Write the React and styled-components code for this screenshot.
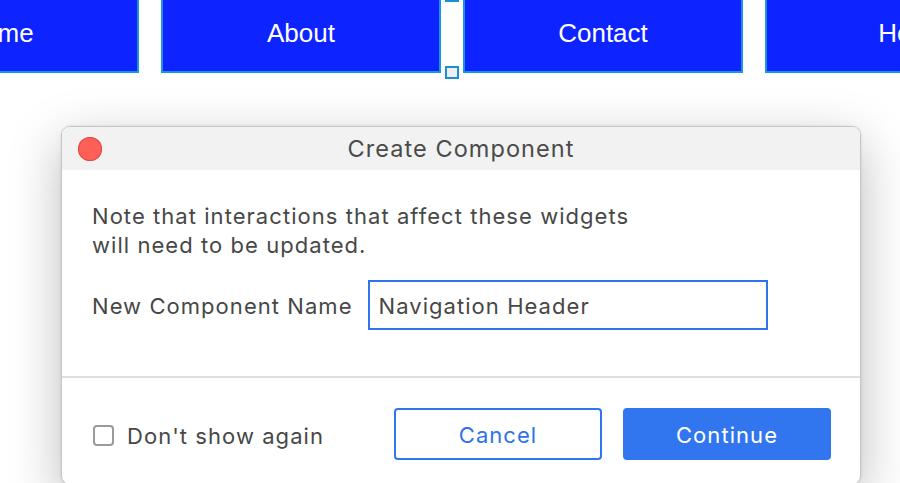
import React from "react";
import styled, { createGlobalStyle } from "styled-components";

const Global = createGlobalStyle`
  html, body { margin: 0; padding: 0; background: #ffffff; }
  body { width: 900px; height: 483px; overflow: hidden; }
`;

const Page = styled.div`
  width: 900px;
  height: 483px;
  overflow: hidden;
  display: flex;
  flex-direction: column;
  align-items: flex-start;
`;

const NavWrap = styled.div`
  position: relative;
  margin-left: -141px;
`;

const NavRow = styled.div`
  display: flex;
  gap: 22px;
`;

const NavButton = styled.div`
  box-sizing: border-box;
  flex: 0 0 280px;
  height: 73px;
  background: #0d23ff;
  border: 2px solid #1b95d9;
  border-top: none;
  display: flex;
  align-items: center;
  justify-content: center;
  padding-bottom: 4px;
  color: #ffffff;
  font-family: "Liberation Sans", Arial, sans-serif;
  font-size: 26px;
`;

const Handle = styled.div`
  position: absolute;
  left: ${(p) => p.x}px;
  top: ${(p) => p.y}px;
  box-sizing: border-box;
  width: 14px;
  height: 13px;
  border: 2px solid #1b8fd4;
  background: #efefef;
`;

const Dialog = styled.div`
  margin-top: 53px;
  margin-left: 61px;
  width: 800px;
  box-sizing: border-box;
  background: #ffffff;
  border: 1px solid #c6c6c6;
  border-radius: 9px;
  box-shadow: 0 16px 52px rgba(0, 0, 0, 0.27), 0 0 3px rgba(0, 0, 0, 0.1);
  font-family: Inter, "Noto Sans", sans-serif;
  letter-spacing: 1.05px;
  color: #474747;
  flex-shrink: 0;
`;

const TitleBar = styled.div`
  position: relative;
  height: 43px;
  background: #f2f2f2;
  border-radius: 8px 8px 0 0;
  display: flex;
  align-items: center;
  justify-content: center;
  font-size: 23.5px;
  color: #4a4a4a;
`;

const CloseDot = styled.span`
  position: absolute;
  left: 16px;
  top: 10px;
  width: 24px;
  height: 24px;
  border-radius: 50%;
  background: #fe5f57;
  box-shadow: inset 0 0 0 1px #e2463f;
`;

const Body = styled.div`
  padding: 32px 30px 46px 30px;
  display: flex;
  flex-direction: column;
  gap: 20px;
`;

const Note = styled.p`
  margin: 0;
  font-size: 22px;
  line-height: 29px;
`;

const FieldRow = styled.div`
  display: flex;
  align-items: center;
  gap: 15px;
  font-size: 22px;
`;

const FieldLabel = styled.span`
  padding-top: 2px;
`;

const NameInput = styled.div`
  box-sizing: border-box;
  width: 400px;
  height: 50px;
  border: 2px solid #2f74ea;
  display: flex;
  align-items: center;
  padding: 1px 0 0 9px;
  font-size: 22px;
  color: #474747;
`;

const Divider = styled.div`
  height: 2px;
  background: #dedede;
`;

const Footer = styled.div`
  padding: 30px 29px 24px 31px;
  display: flex;
  align-items: center;
`;

const CheckLabel = styled.label`
  display: flex;
  align-items: center;
  gap: 13px;
  font-size: 22px;
  flex: 1;
  padding-top: 3px;
`;

const Box = styled.span`
  box-sizing: border-box;
  width: 21px;
  height: 21px;
  border: 2px solid #9a9a9a;
  border-radius: 4px;
  background: #fff;
`;

const Buttons = styled.div`
  display: flex;
  gap: 21px;
`;

const Button = styled.div`
  box-sizing: border-box;
  width: 208px;
  height: 52px;
  border-radius: 4px;
  display: flex;
  align-items: center;
  justify-content: center;
  padding-top: 2px;
  font-size: 22px;
  border: 2px solid #3176ef;
  background: ${(p) => (p.primary ? "#3176ef" : "#ffffff")};
  color: ${(p) => (p.primary ? "#ffffff" : "#2f72e8")};
`;

export default function App() {
  return (
    <Page>
      <Global />
      <NavWrap>
        <NavRow>
          <NavButton>Home</NavButton>
          <NavButton>About</NavButton>
          <NavButton>Contact</NavButton>
          <NavButton>Help</NavButton>
        </NavRow>
        <Handle x={586} y={-11} />
        <Handle x={586} y={66} />
      </NavWrap>
      <Dialog>
        <TitleBar>
          <CloseDot />
          Create Component
        </TitleBar>
        <Body>
          <Note>
            Note that interactions that affect these widgets
            <br />
            will need to be updated.
          </Note>
          <FieldRow>
            <FieldLabel>New Component Name</FieldLabel>
            <NameInput>Navigation Header</NameInput>
          </FieldRow>
        </Body>
        <Divider />
        <Footer>
          <CheckLabel>
            <Box />
            Don't show again
          </CheckLabel>
          <Buttons>
            <Button>Cancel</Button>
            <Button primary>Continue</Button>
          </Buttons>
        </Footer>
      </Dialog>
    </Page>
  );
}
